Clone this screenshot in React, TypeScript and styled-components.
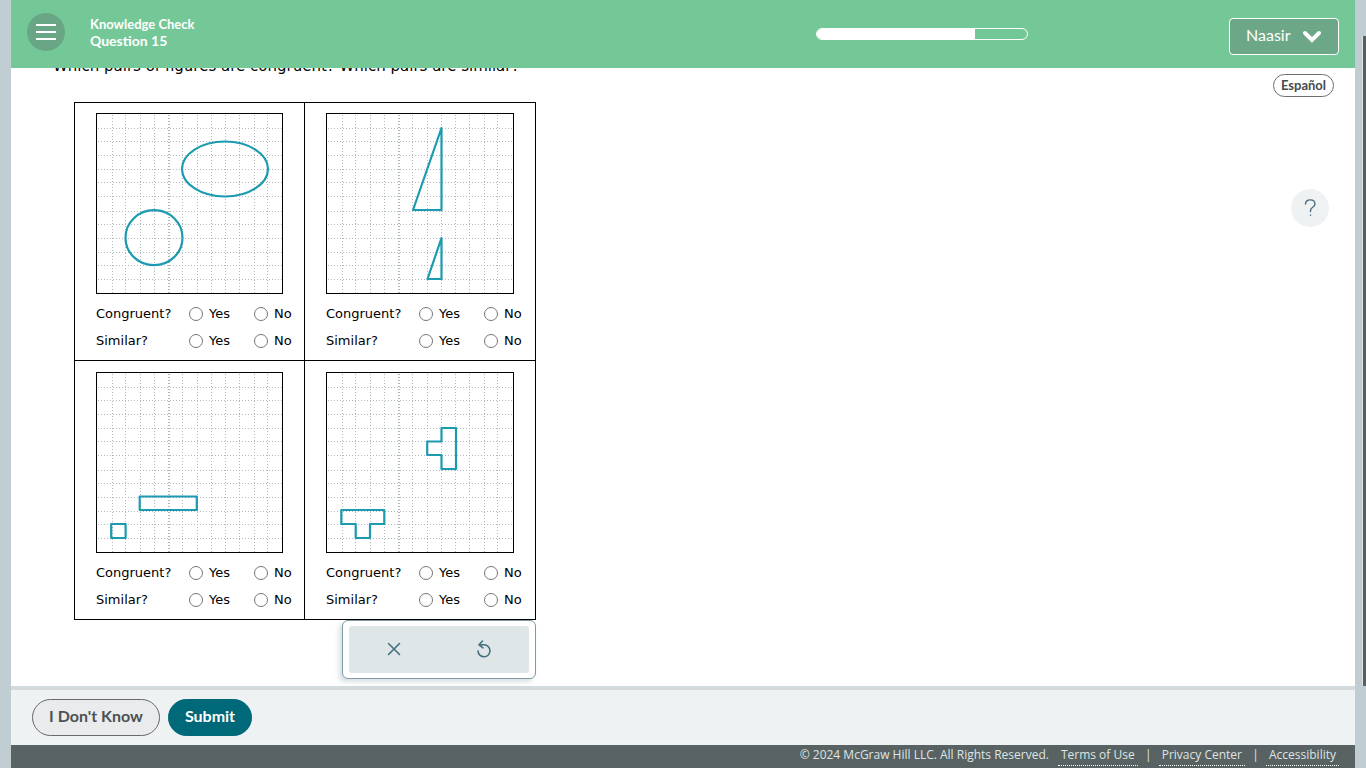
import React from "react";
import styled, { createGlobalStyle } from "styled-components";

const Global = createGlobalStyle`
  *, *::before, *::after { box-sizing: border-box; }
  body { margin: 0; background: #c0cdd3; font-family: Lato, sans-serif; }
`;

const Shell = styled.div`
  display: flex;
  height: 100vh;
  padding-left: 11px;
`;
const Page = styled.div`
  flex: 1;
  min-width: 0;
  display: flex;
  flex-direction: column;
  background: #fff;
`;
const Gutter = styled.div`
  width: 11px;
  padding: 36px 0 82px 7px;
  display: flex;
`;
const Thumb = styled.div`
  flex: 1;
  background: #585f60;
  border-left: 1px solid #dde3e6;
`;

const Header = styled.header`
  flex: none;
  display: flex;
  align-items: center;
  height: 68px;
  padding: 0 16px;
  background: #74c898;
  color: #fff;
`;
const MenuButton = styled.button`
  width: 38px;
  height: 38px;
  margin: 0 25px 4px 0;
  padding: 0;
  border: 0;
  border-radius: 50%;
  background: #68a685;
  display: grid;
  place-items: center;
`;
const Titles = styled.div`
  flex: 1;
  padding-bottom: 2px;
`;
const Eyebrow = styled.div`
  font: 700 13px/16px Lato, sans-serif;
`;
const Title = styled.h1`
  margin: 0;
  font: 700 14px/18px Lato, sans-serif;
`;
const Progress = styled.div`
  width: 212px;
  height: 12px;
  margin-right: 201px;
  border: 1px solid #fff;
  border-radius: 6px;
  overflow: hidden;
`;
const Bar = styled.div`
  height: 100%;
  background: #fff;
`;
const UserButton = styled.button`
  width: 110px;
  height: 37px;
  margin-top: 4px;
  padding: 0 16px 3px;
  display: flex;
  align-items: center;
  justify-content: space-between;
  border: 1px solid #fff;
  border-radius: 4px;
  background: #6ca887;
  color: #fff;
  font: 400 16px/20px Lato, sans-serif;
`;

const Main = styled.main`
  flex: 1;
  min-height: 0;
  overflow: hidden;
  display: flex;
  justify-content: space-between;
`;
const Question = styled.form`
  padding-left: 42px;
`;
const Prompt = styled.p`
  margin: -12px 0 26px;
  font: 15px/20px "DejaVu Sans", sans-serif;
  color: #000;
`;
const Board = styled.div`
  width: 462px;
  margin-left: 21px;
  display: grid;
  grid-template-columns: 230px 231px;
  grid-template-rows: 258px 259px;
  border: solid #000;
  border-width: 1px 0 0 1px;
`;
const Cell = styled.section`
  display: flex;
  flex-direction: column;
  justify-content: flex-end;
  padding: 0 10px 0 21px;
  border: solid #000;
  border-width: 0 1px 1px 0;
`;
const Plot = styled.svg`
  display: block;
  width: calc(100% - 11px);
  height: 181px;
  margin-bottom: 12px;
  border: 1px solid #000;
`;
const Choice = styled.fieldset`
  display: flex;
  align-items: center;
  height: 27px;
  margin: 0;
  padding: 0;
  border: 0;
  font: 13px/16px "DejaVu Sans", sans-serif;
  color: #000;
`;
const ChoiceName = styled.span`
  width: 93px;
`;
const Option = styled.label`
  display: flex;
  align-items: center;
  gap: 6px;
  width: 65px;
  white-space: nowrap;
  &:last-child { width: auto; }
`;
const Radio = styled.input`
  appearance: none;
  flex: none;
  width: 14px;
  height: 14px;
  margin: 0;
  border: 1px solid #767676;
  border-radius: 50%;
  background: #fff;
`;

const Toolbar = styled.div`
  width: 194px;
  margin-left: 289px;
  padding: 5px 6px;
  border: 1px solid #7f9ca6;
  border-radius: 6px;
  background: #fff;
  box-shadow: -3px 3px 5px rgba(60, 100, 115, 0.2);
`;
const Tools = styled.div`
  display: flex;
  height: 47px;
  border-radius: 3px;
  background: #dfe6e8;
`;
const Tool = styled.button`
  flex: 1;
  display: grid;
  place-items: center;
  padding: 0 0 2px;
  border: 0;
  background: none;
`;

const Side = styled.aside`
  display: flex;
  flex-direction: column;
  align-items: flex-end;
  padding: 6px 21px 0 0;
`;
const Language = styled.button`
  width: 61px;
  height: 23px;
  padding: 0 0 2px;
  border: 1px solid #6a7072;
  border-radius: 12px;
  background: #fff;
  color: #454b4d;
  font: 700 13px/16px Lato, sans-serif;
`;
const Help = styled.button`
  width: 38px;
  height: 38px;
  margin: 92px 5px 0 0;
  padding: 0;
  border: 0;
  border-radius: 50%;
  background: #eff2f2;
  display: grid;
  place-items: center;
`;

const Actions = styled.div`
  flex: none;
  display: flex;
  gap: 8px;
  height: 59px;
  padding: 9px 21px;
  border-top: 4px solid #d3dade;
  background: #eef2f3;
`;
const Action = styled.button<{ $primary?: boolean }>`
  width: ${(p) => (p.$primary ? "84px" : "128px")};
  height: 37px;
  padding: 0 0 4px;
  border: 1px solid ${(p) => (p.$primary ? "#006979" : "#656b6c")};
  border-radius: 19px;
  background: ${(p) => (p.$primary ? "#006979" : "#e9ebec")};
  color: ${(p) => (p.$primary ? "#fff" : "#4c5254")};
  font: 700 16px/20px Lato, sans-serif;
  white-space: nowrap;
`;
const Footer = styled.footer`
  flex: none;
  display: flex;
  justify-content: flex-end;
  align-items: flex-start;
  height: 23px;
  padding: 0 16px;
  background: #586262;
  color: #dfe4e4;
  font: 12px/20px "Open Sans", sans-serif;
  white-space: nowrap;
`;
const Copyright = styled.span`
  margin-right: 9px;
`;
const FootLink = styled.a`
  padding: 0 3px;
  border-bottom: 1px dotted #fff;
  color: inherit;
  text-decoration: none;
`;
const Divider = styled.span`
  width: 21px;
  text-align: center;
`;

const columns = [16, 29, 44, 58, 72, 73, 86, 101, 115, 129, 143, 158, 171];
const rows = [15, 28, 42, 56, 69, 83, 98, 111, 125, 139, 152, 166];

const figures = [
  <>
    <ellipse cx="129" cy="56" rx="43" ry="27.5" />
    <ellipse cx="58" cy="124.7" rx="28.5" ry="27.5" />
  </>,
  <>
    <path d="M115.5 15V97H87Z" />
    <path d="M115.5 125V166H101.5Z" />
  </>,
  <>
    <path d="M43.7 124.5H100.8V138H43.7Z" />
    <path d="M15.2 152H29.6V166H15.2Z" />
  </>,
  <>
    <path d="M115.5 56H130V97H115.5V83H101.2V69.5H115.5Z" />
    <path d="M15.3 138H58.3V152H44V166H29.7V152H15.3Z" />
  </>,
];

function Graph({ children }: { children: React.ReactNode }) {
  return (
    <Plot role="img" aria-label="Pair of figures on a grid">
      <g transform="translate(-1 -1)">
        <g stroke="#b0b9bc" strokeDasharray="1 2" shapeRendering="crispEdges">
          {columns.map((x) => (
            <path key={x} d={`M${x + 0.5} 2V180`} />
          ))}
          {rows.map((y) => (
            <path key={y} d={`M2 ${y + 0.5}H186`} />
          ))}
        </g>
        <g fill="none" stroke="#1b9ab0" strokeWidth="2.2" strokeLinejoin="round">
          {children}
        </g>
      </g>
    </Plot>
  );
}

export default function App() {
  return (
    <>
      <Global />
      <Shell>
        <Page>
          <Header>
            <MenuButton type="button" aria-label="Menu">
              <svg width="20" height="16" stroke="#fff" strokeWidth="2">
                <path d="M0 1H20M0 8H20M0 15H20" />
              </svg>
            </MenuButton>
            <Titles>
              <Eyebrow>Knowledge Check</Eyebrow>
              <Title>Question 15</Title>
            </Titles>
            <Progress role="progressbar" aria-label="Progress" aria-valuenow={75}>
              <Bar style={{ width: "75%" }} />
            </Progress>
            <UserButton type="button">
              Naasir
              <svg width="20" height="16" viewBox="0 0 20 16" fill="none" stroke="#fff" strokeWidth="4" strokeLinecap="round">
                <path d="M3 6L10 13L17 6" />
              </svg>
            </UserButton>
          </Header>
          <Main>
            <Question>
              <Prompt>Which pairs of figures are congruent? Which pairs are similar?</Prompt>
              <Board>
                {figures.map((figure, i) => (
                  <Cell key={i}>
                    <Graph>{figure}</Graph>
                    {["Congruent", "Similar"].map((name) => (
                      <Choice key={name} aria-label={name}>
                        <ChoiceName>{name}?</ChoiceName>
                        {["Yes", "No"].map((value) => (
                          <Option key={value}>
                            <Radio type="radio" name={`${name}-${i}`} value={value} />
                            {value}
                          </Option>
                        ))}
                      </Choice>
                    ))}
                  </Cell>
                ))}
              </Board>
              <Toolbar>
                <Tools>
                  <Tool type="button" aria-label="Clear">
                    <svg width="14" height="14" stroke="#44707f" strokeWidth="1.6" strokeLinecap="round">
                      <path d="M1.5 1.5L12.5 12.5M12.5 1.5L1.5 12.5" />
                    </svg>
                  </Tool>
                  <Tool type="button" aria-label="Undo">
                    <svg width="16" height="18" viewBox="0 0 16 18" fill="none" stroke="#44707f" strokeWidth="1.6" strokeLinecap="round" strokeLinejoin="round">
                      <path d="M6.5 1L3 4.8L7 7.8M3 4.8H8A6 6 0 1 1 2 11" />
                    </svg>
                  </Tool>
                </Tools>
              </Toolbar>
            </Question>
            <Side>
              <Language type="button">Español</Language>
              <Help type="button" aria-label="Help">
                <svg width="12" height="18" viewBox="0 0 12 18" fill="none" stroke="#4d6f7d" strokeWidth="1.4" strokeLinecap="round">
                  <path d="M1.5 5C1.5 -0.5 11 -0.5 11 5C11 8.5 6.5 8 6.5 11.5V12.5M6.5 16V16.2" />
                </svg>
              </Help>
            </Side>
          </Main>
          <Actions>
            <Action type="button">I Don't Know</Action>
            <Action type="submit" $primary>Submit</Action>
          </Actions>
          <Footer>
            <Copyright>© 2024 McGraw Hill LLC. All Rights Reserved.</Copyright>
            <FootLink href="#terms">Terms of Use</FootLink>
            <Divider>|</Divider>
            <FootLink href="#privacy">Privacy Center</FootLink>
            <Divider>|</Divider>
            <FootLink href="#accessibility">Accessibility</FootLink>
          </Footer>
        </Page>
        <Gutter>
          <Thumb />
        </Gutter>
      </Shell>
    </>
  );
}
